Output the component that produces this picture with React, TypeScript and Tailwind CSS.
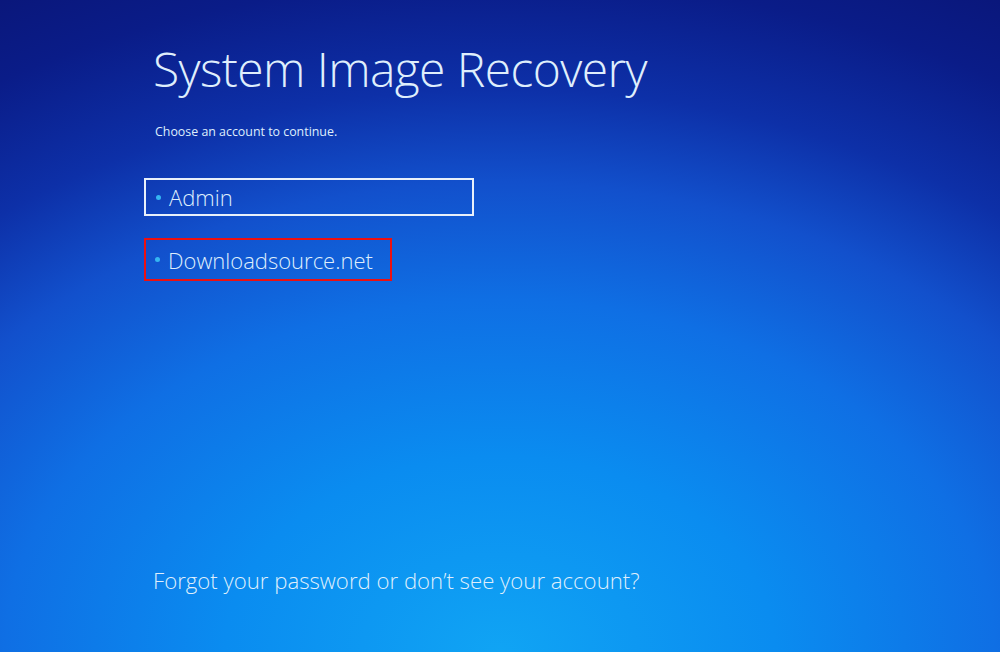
import React from 'react';

const accounts = [
  { name: 'Admin', kind: 'selected' },
  { name: 'Downloadsource.net', kind: 'marked' },
];

const App = () => {
  return (
    <div
      className="h-[652px] w-[1000px] overflow-hidden bg-[radial-gradient(ellipse_110%_120%_at_50%_100%,#10a4f4_0%,#0a8cf0_25%,#0f6fe4_45%,#1250cc_60%,#0d30a8_72%,#0a1c88_86%,#0a1474_100%)] text-[#dfeefc]"
      style={{ fontFamily: '"Open Sans", "Noto Sans", sans-serif' }}
    >
      <div className="flex h-full flex-col pl-[153px] pt-[38px] pb-[57px]">
        <h1 className="text-[48px] font-light leading-[62px] tracking-[-0.6px]">System Image Recovery</h1>
        <p className="mt-[24px] pl-[2px] text-[12.4px] leading-[16px]">Choose an account to continue.</p>

        <div className="mt-[38px] flex flex-col gap-[22px] -ml-[9px]">
          {accounts.map((a) => (
            <div
              key={a.name}
              className={
                a.kind === 'selected'
                  ? 'flex h-[38px] w-[330px] items-center border-2 border-[#e8f0fa] pl-[10px]'
                  : 'flex h-[43px] w-[248px] items-center border-2 border-[#ee1010] pl-[9px]'
              }
            >
              <span className="mr-[8px] h-[5px] w-[5px] rounded-full bg-[#35b6f2]" />
              <span className="text-[22px] font-light leading-none">{a.name}</span>
            </div>
          ))}
        </div>

        <div className="mt-auto">
          <p className="text-[22.2px] font-light leading-[28px]">Forgot your password or don’t see your account?</p>
        </div>
      </div>
    </div>
  );
};

export default App;
